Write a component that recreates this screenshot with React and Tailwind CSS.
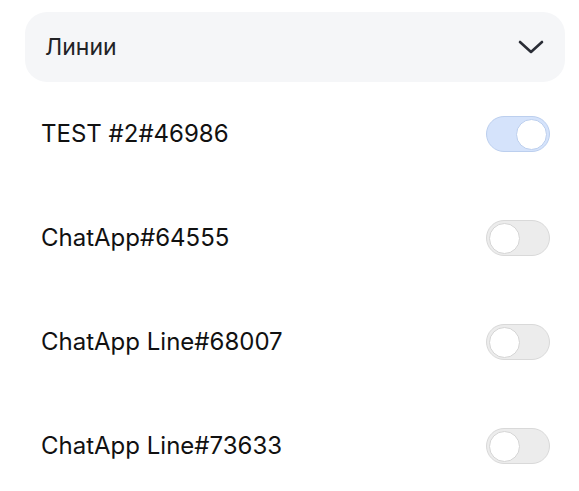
import React from "react";

function Toggle({ on }) {
  return (
    <div
      className={
        "w-[64px] h-[36px] rounded-full border flex items-center px-[2px] " +
        (on
          ? "bg-[#d5e3fb] border-[#bccfee] justify-end"
          : "bg-[#ececec] border-[#d9d9d9] justify-start")
      }
    >
      <div
        className={
          "w-[31px] h-[31px] rounded-full bg-white border " +
          (on ? "border-[#bccfee]" : "border-[#d5d5d5]")
        }
      />
    </div>
  );
}

export default function App() {
  const rows = [
    { name: "TEST #2#46986", on: true },
    { name: "ChatApp#64555", on: false },
    { name: "ChatApp Line#68007", on: false },
    { name: "ChatApp Line#73633", on: false },
  ];
  return (
    <div
      className="w-[579px] h-[491px] bg-white overflow-hidden pt-[12px] pl-[25px] pr-[14px]"
      style={{ fontFamily: "Inter, 'Noto Sans', sans-serif" }}
    >
      <div className="h-[70px] w-[540px] rounded-[22px] bg-[#f5f6f8] flex items-center justify-between pl-[20px] pr-[21px]">
        <span className="text-[23px] text-[#222326]">Линии</span>
        <svg width="26" height="16" viewBox="0 0 26 16" fill="none">
          <path
            d="M2 3L13 13L24 3"
            stroke="#2a2d36"
            strokeWidth="2.6"
            strokeLinecap="round"
            strokeLinejoin="round"
          />
        </svg>
      </div>
      <div className="flex flex-col w-[540px]">
        {rows.map((r) => (
          <div
            key={r.name}
            className="h-[104px] flex items-center justify-between pl-[16px] pr-[15px]"
          >
            <span className="text-[24px] text-[#111111]">{r.name}</span>
            <Toggle on={r.on} />
          </div>
        ))}
      </div>
    </div>
  );
}
